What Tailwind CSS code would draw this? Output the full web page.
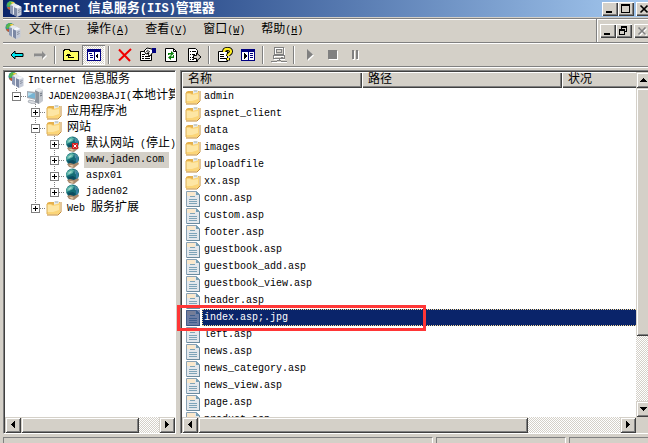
<!DOCTYPE html>
<html lang="zh-CN">
<head>
<meta charset="utf-8">
<title>Internet 信息服务(IIS)管理器</title>
<script src="https://cdn.jsdelivr.net/npm/@tailwindcss/browser@4"></script>
</head>
<body class="h-screen overflow-hidden bg-[#d4d0c8] font-['Liberation_Mono','Noto_Sans_CJK_SC',monospace] text-xs text-black">

<svg class="hidden" aria-hidden="true">
  <symbol id="iis" viewBox="0 0 16 16">
    <circle cx="5" cy="4.500" r="4.500" fill="#2c8a96"/>
    <path d="M1 3l3-3 3 1-2 3-3 2z" fill="#58b848"/><path d="M5 1h3l1 2-3 1z" fill="#e8c840"/><path d="M1 6l3 0 0 3-2-1z" fill="#c05838"/>
    <path d="M4 4l4-2 4 2v9l-4 1-4-2z" fill="#e6e9f0"/><path d="M4 4l3 1v9l-3-2z" fill="#8c98b4"/>
    <path d="M8 6l4-2 3.500 2v8L11 16l-3-2z" fill="#c4cad8"/><path d="M8 6l3 1v9l-3-2z" fill="#7c88a4"/><path d="M8 6l4-2 3.500 2L11 7.500z" fill="#f4f6fa"/>
    <path d="M12 9.500l2.500-1M12 11.500l2.500-1" stroke="#8890a0"/>
  </symbol>
  <symbol id="server" viewBox="0 0 16 16">
    <path d="M8 2l4-2 4 2v11l-4 3-4-2z" fill="#c4c8ce"/><path d="M8 2l4 2v12l-4-2z" fill="#8d949e"/><path d="M8 2l4-2 4 2-4 2z" fill="#eceef0"/>
    <path d="M13 6l2-1M13 8l2-1" stroke="#646c78"/>
    <path d="M0 3l9 1v8l-9-2z" fill="#a4abb4"/><path d="M1 4.500l7 1v5l-7-1.500z" fill="#76b4d4"/><path d="M1 4.500l5 .8-5 3z" fill="#b4dcee"/>
    <path d="M2 12l5 1 2 2-3 1-5-2z" fill="#d8dbe0" stroke="#8d949e" stroke-width=".6"/>
  </symbol>
  <symbol id="folder" viewBox="0 0 16 16">
    <path d="M1 3l2-1h5l1 1 5-1v11l-3 1H1z" fill="#e4b04c"/>
    <path d="M8 1l5 0v4H8z" fill="#e8ecec"/><path d="M9 2h3" stroke="#a8b4b4"/>
    <path d="M1 4h4l2 1 7-2v10l-3 1.500H1z" fill="#fbd578"/>
    <path d="M1 5h4l2 1 6-1v5l-6 2H1z" fill="#fde6a4"/>
    <path d="M15 2v10l-3 3H1" fill="none" stroke="#c48c34"/>
    <path d="M1 4v10" stroke="#dcae54"/>
  </symbol>
  <symbol id="file" viewBox="0 0 14 16">
    <path d="M.5.500h10l3 3v12H.500z" fill="#e4e8ec" stroke="#8aa2b4"/>
    <path d="M1 1h8v4H1z" fill="#fae8cc"/><path d="M10 0v4h4" fill="#78a0b4"/>
    <path d="M13.500 4v12M1 15.500h12" stroke="#6c8ca0"/>
    <path d="M4 5.500h5M3 8.500h8M3 10.500h8M3 12.500h8" stroke="#7ea4b8"/>
  </symbol>
  <symbol id="globe" viewBox="0 0 16 16">
    <circle cx="7.500" cy="7" r="6.500" fill="#146c76"/>
    <path d="M2 4l4-3 3 1-1 3-4 2-3 1z" fill="#5cb4a8"/><path d="M9 1l4 3 0 3-3-1z" fill="#4c90a4"/><path d="M3 9l5-1 3 2-3 3-4-1z" fill="#0c4c60"/>
    <path d="M3 5l3-2 1 1-3 2z" fill="#a8dcd0"/>
    <path d="M2 12l3-1 4 1 4-2 1 2-5 4-5-1z" fill="#a8886c"/><path d="M4 13l3 0 2 1-2 1z" fill="#e4c8a4"/>
    <path d="M11 4l2 1v5l-2 1z" fill="#347ca0"/>
  </symbol>
  <symbol id="line" viewBox="0 0 19 16"><path d="M4.500 0v16" stroke="#808080" stroke-dasharray="1 1"/></symbol>
  <symbol id="plus" viewBox="0 0 15 16">
    <path d="M4.500 0v16M9 8.500h6" stroke="#808080" stroke-dasharray="1 1"/>
    <path d="M.5 4.500h8v8h-8z" fill="#fff" stroke="#808080"/><path d="M2 8.500h5M4.500 6v5" stroke="#000"/>
  </symbol>
  <symbol id="plus-end" viewBox="0 0 15 16">
    <path d="M4.500 0v8M9 8.500h6" stroke="#808080" stroke-dasharray="1 1"/>
    <path d="M.5 4.500h8v8h-8z" fill="#fff" stroke="#808080"/><path d="M2 8.500h5M4.500 6v5" stroke="#000"/>
  </symbol>
  <symbol id="minus" viewBox="0 0 15 16">
    <path d="M4.500 0v4M9 8.500h6" stroke="#808080" stroke-dasharray="1 1"/>
    <path d="M.5 4.500h8v8h-8z" fill="#fff" stroke="#808080"/><path d="M2 8.500h5" stroke="#000"/>
  </symbol>
  <symbol id="arrow-left" viewBox="0 0 16 16"><path d="M9 4h1v7H9v-1H8V9H7V8H6V7h1V6h1V5h1z"/></symbol>
  <symbol id="arrow-right" viewBox="0 0 16 16"><path d="M6 4h1v1h1v1h1v1h1v1H9v1H8v1H7v1H6z"/></symbol>
  <symbol id="arrow-up" viewBox="0 0 16 16"><path d="M7 6h1v1h1v1h1v1h1v1H4V9h1V8h1V7h1z"/></symbol>
  <symbol id="arrow-down" viewBox="0 0 16 16"><path d="M4 6h7v1h-1v1H9v1H8v1H7V9H6V8H5V7H4z"/></symbol>
</svg>

<div class="flex h-full w-[calc(100%+4px)] flex-col pl-[3px]">

  <header class="mb-px flex h-[17px] shrink-0 items-center bg-linear-to-r from-[#0a246a] to-[#a6caf0] pl-[3px] text-white">
    <svg class="size-4"><use href="#iis"/></svg>
    <h1 class="ml-px whitespace-nowrap text-[13px] leading-4 font-bold"><span class="text-xs">Internet </span>信息服务<span class="text-xs">(IIS)</span>管理器</h1>
    <div class="ml-auto flex">
      <button aria-label="最小化" class="h-[14px] w-4 bg-[#d4d0c8] shadow-[inset_1px_1px_#fff,inset_-1px_-1px_#404040,inset_-2px_-2px_#808080]"><svg class="h-[14px] w-4" shape-rendering="crispEdges"><path d="M4 9h6v2H4z"/></svg></button>
      <button aria-label="最大化" class="mr-[2px] h-[14px] w-4 bg-[#d4d0c8] shadow-[inset_1px_1px_#fff,inset_-1px_-1px_#404040,inset_-2px_-2px_#808080]"><svg class="h-[14px] w-4" shape-rendering="crispEdges"><path d="M3 2h9v9H3zM4 4v6h7V4z" fill-rule="evenodd"/></svg></button>
      <button aria-label="关闭" class="h-[14px] w-4 bg-[#d4d0c8] shadow-[inset_1px_1px_#fff,inset_-1px_-1px_#404040,inset_-2px_-2px_#808080]"><svg class="h-[14px] w-4"><path d="M4.500 3.500l7 7M11.500 3.500l-7 7" stroke="#000" stroke-width="1.600"/></svg></button>
    </div>
  </header>

  <div class="flex h-6 shrink-0 items-center border-t border-[#808080] pl-[2px] shadow-[inset_0_1px_#fff]">
    <svg class="size-4"><use href="#iis"/></svg>
    <nav class="flex whitespace-nowrap leading-4" aria-label="菜单">
      <button class="px-2">文件<span class="text-[10px]">(<u>F</u>)</span></button>
      <button class="px-2">操作<span class="text-[10px]">(<u>A</u>)</span></button>
      <button class="px-2">查看<span class="text-[10px]">(<u>V</u>)</span></button>
      <button class="px-2">窗口<span class="text-[10px]">(<u>W</u>)</span></button>
      <button class="px-2">帮助<span class="text-[10px]">(<u>H</u>)</span></button>
    </nav>
    <div class="ml-auto flex h-full items-center border-l border-[#808080] pr-[2px] pl-[3px] shadow-[inset_1px_1px_#fff]">
      <button aria-label="最小化窗口" class="h-[14px] w-4 shadow-[inset_1px_1px_#fff,inset_-1px_-1px_#404040,inset_-2px_-2px_#808080]"><svg class="h-[14px] w-4" shape-rendering="crispEdges"><path d="M4 9h6v2H4z"/></svg></button>
      <button aria-label="还原窗口" class="mr-[2px] h-[14px] w-4 shadow-[inset_1px_1px_#fff,inset_-1px_-1px_#404040,inset_-2px_-2px_#808080]"><svg class="h-[14px] w-4" shape-rendering="crispEdges"><path d="M5 2h6v6H9v3H3V5h2zM6 4v1h3v2h1V4zM4 7v3h4V7z" fill-rule="evenodd"/></svg></button>
      <button aria-label="关闭窗口" class="h-[14px] w-4 shadow-[inset_1px_1px_#fff,inset_-1px_-1px_#404040,inset_-2px_-2px_#808080]"><svg class="h-[14px] w-4" fill="none" stroke-width="1.600"><path d="M5.500 4.500l7 7M12.500 4.500l-7 7" stroke="#fff"/><path d="M4.500 3.500l7 7M11.500 3.500l-7 7" stroke="#808080"/></svg></button>
    </div>
  </div>

  <div role="toolbar" aria-label="工具栏" class="flex h-6 shrink-0 items-center border-t border-[#808080] pl-[2px] shadow-[inset_0_1px_#fff]">
    <button aria-label="后退" class="flex w-[23px] justify-center"><svg class="size-4"><path d="M2 8l4-4v2.500h8v3H6V12z" fill="#00e8f0" stroke="#000"/></svg></button>
    <button aria-label="前进" class="flex w-[23px] justify-center"><svg class="size-4"><path d="M15 9l-4-4v2H3v3h8v3z" fill="#fff"/><path d="M14 8l-4-4v2.500H2v3h8V12z" fill="#8c8c8c"/></svg></button>
    <span class="mx-[3px] h-[18px] w-[2px] border-r border-l border-r-white border-l-[#808080]"></span>
    <button aria-label="上一级" class="flex w-[23px] justify-center"><svg class="size-4" shape-rendering="crispEdges"><path d="M.5 4.500l1-2h5l1 2h8v9H.500z" fill="#ffff60" stroke="#000"/><path d="M5.500 11V7M5 10.500h6M3 8.500h5M4 7.500h3" stroke="#000" fill="none"/></svg></button>
    <button aria-label="显示控制台树" aria-pressed="true" class="flex h-5 w-[23px] items-center justify-center bg-[repeating-conic-gradient(#d4d0c8_0_25%,#fff_0_50%)] bg-[length:2px_2px] shadow-[inset_1px_1px_#808080,inset_-1px_-1px_#fff]"><svg class="size-4" shape-rendering="crispEdges"><path d="M1 2h14v12H1z" fill="#000080"/><path d="M2 5h6v8H2zM9 5h5v8H9z" fill="#fff"/><path d="M3 6h3v1H3zM4 8h3v1H4zM4 10h3v1H4z" fill="#000080"/><path d="M12 6v6l-3-3z"/></svg></button>
    <span class="mx-[3px] h-[18px] w-[2px] border-r border-l border-r-white border-l-[#808080]"></span>
    <button aria-label="删除" class="flex w-[23px] justify-center"><svg class="size-4"><path d="M2 2.500L13 14M14 2L2 13.500" stroke="#f00000" stroke-width="2"/></svg></button>
    <button aria-label="属性" class="flex w-[23px] justify-center"><svg class="size-4"><path d="M.5 4.500h11v9H.500z" fill="#fff" stroke="#000"/><path d="M2 9.500h2M5 9.500h5M2 11.500h2M5 11.500h5M2 7.500h3" stroke="#000"/><path d="M4 4l3-3 5 1 1 3-3 4-2-1 1-2-3 1z" fill="#fff" stroke="#000"/><path d="M7 3l3 2M6 4l3 2" stroke="#000" stroke-width=".8"/><path d="M12 1h4v5h-4z" fill="#000080"/></svg></button>
    <button aria-label="刷新" class="flex w-[23px] justify-center"><svg class="size-4"><path d="M2.500 1.500h8l3 3v10h-11z" fill="#fff" stroke="#000"/><path d="M10.500 1.500v3h3" fill="none" stroke="#000"/><path d="M5 8V6h3V4l3 2.500L8 9V7.500H6V8zM11 8v3H8v2l-3-2.500L8 8v1.500h2V8z" fill="#088008"/></svg></button>
    <button aria-label="导出列表" class="flex w-[23px] justify-center"><svg class="size-4"><path d="M2.500 1.500h7l2 2v11h-9z" fill="#fff" stroke="#000"/><path d="M4 4.500h1M6 4.500h4M4 7.500h1M6 7.500h3M4 10.500h1M6 10.500h2M4 12.500h1M6 12.500h2" stroke="#000"/><path d="M7.500 8.500h3V6l4.500 4-4.500 4v-2.500h-3z" fill="#d4d0c8" stroke="#000"/></svg></button>
    <span class="mx-[3px] h-[18px] w-[2px] border-r border-l border-r-white border-l-[#808080]"></span>
    <button aria-label="帮助主题" class="flex w-[23px] justify-center"><svg class="size-4"><path d="M1.500 4.500h9v10h-9z" fill="#fff" stroke="#000"/><path d="M3 7.500h4M3 9.500h4M3 11.500h6" stroke="#000"/><path d="M7 5c0-4 7-4 7-.5 0 2.500-3 2-3 4.500M11 11v2.500" fill="none" stroke="#000" stroke-width="4"/><path d="M7 5c0-4 7-4 7-.5 0 2.500-3 2-3 4.500M11 11v2" fill="none" stroke="#ffee20" stroke-width="2.200"/></svg></button>
    <button aria-label="显示窗格" class="flex w-[23px] justify-center"><svg class="size-4" shape-rendering="crispEdges"><path d="M1 2h14v12H1z" fill="#000080"/><path d="M2 5h6v8H2zM9 5h5v8H9z" fill="#fff"/><path d="M10 6h3v1h-3zM10 8h3v1h-3zM10 10h3v1h-3z" fill="#000080"/><path d="M4 6v6l3-3z"/></svg></button>
    <span class="mx-[3px] h-[18px] w-[2px] border-r border-l border-r-white border-l-[#808080]"></span>
    <button aria-label="连接计算机" class="flex w-[23px] justify-center"><svg class="size-4" shape-rendering="crispEdges" fill="none"><path d="M4.500 1.500h9v7h-9zM3.500 9.500h10v3h-10zM1 15.500h15" stroke="#fff"/><path d="M3.500.500h9v7h-9zM5.500 2.500h5v3h-5zM2.500 8.500h11v3h-11zM10 10.500h2M0 14.500h6M10 14.500h6M6 13.500h4M8 12v2" stroke="#808080"/></svg></button>
    <span class="mx-[3px] h-[18px] w-[2px] border-r border-l border-r-white border-l-[#808080]"></span>
    <button aria-label="启动" class="flex w-[23px] justify-center"><svg class="size-4"><path d="M6 3v11l6-5.500z" fill="#fff"/><path d="M5 2v11l6-5.500z" fill="#808080"/></svg></button>
    <button aria-label="停止" class="flex w-[23px] justify-center"><svg class="size-4"><path d="M4 4h9v9H4z" fill="#fff"/><path d="M3 3h9v9H3z" fill="#808080"/></svg></button>
    <button aria-label="暂停" class="flex w-[23px] justify-center"><svg class="size-4"><path d="M5 4h2v9H5zM9 4h2v9H9z" fill="#fff"/><path d="M4 3h2v9H4zM8 3h2v9H8z" fill="#808080"/></svg></button>
  </div>

  <main class="flex min-h-0 flex-1 gap-1 border-t border-[#808080] pt-[3px] shadow-[inset_0_1px_#fff]">

    <section aria-label="控制台树" class="flex w-[173px] shrink-0 border border-t-[#808080] border-r-white border-b-white border-l-[#808080]">
      <div class="flex min-w-0 flex-1 flex-col border-t border-l border-[#404040] bg-white">
        <ul class="min-h-0 flex-1 overflow-hidden whitespace-nowrap leading-4">
          <li class="flex h-4 items-center pl-[3px]"><svg class="mr-1 size-4"><use href="#iis"/></svg><span><span class="text-[10px]">Internet </span>信息服务</span></li>
          <li class="flex h-4 items-center pl-[7px]"><svg class="h-4 w-[15px] shrink-0" shape-rendering="crispEdges"><use href="#minus"/></svg><svg class="mr-[5px] size-4 shrink-0"><use href="#server"/></svg><span><span class="text-[10px]">JADEN2003BAJI(</span>本地计算机<span class="text-[10px]">)</span></span></li>
          <li class="flex h-4 items-center pl-[26px]"><svg class="h-4 w-[15px]" shape-rendering="crispEdges"><use href="#plus"/></svg><svg class="mr-[5px] size-4"><use href="#folder"/></svg>应用程序池</li>
          <li class="flex h-4 items-center pl-[26px]"><svg class="h-4 w-[15px]" shape-rendering="crispEdges"><use href="#plus"/><path d="M4 6h1v2H4zM4 9h1v2H4z" fill="#fff"/></svg><svg class="mr-[5px] size-4"><use href="#folder"/></svg>网站</li>
          <li class="flex h-4 items-center pl-[26px]"><svg class="h-4 w-[19px] shrink-0" shape-rendering="crispEdges"><use href="#line"/></svg><svg class="h-4 w-[15px] shrink-0" shape-rendering="crispEdges"><use href="#plus"/></svg><svg class="mr-[5px] size-4 shrink-0"><use href="#globe"/><path d="M7 7h6v6H7z" fill="#d42020"/><path d="M8.500 8.500l3 3M11.500 8.500l-3 3" stroke="#fff"/></svg><span>默认网站<span class="text-[10px]"> (</span>停止<span class="text-[10px]">)</span></span></li>
          <li class="flex h-4 items-center pl-[26px]"><svg class="h-4 w-[19px]" shape-rendering="crispEdges"><use href="#line"/></svg><svg class="h-4 w-[15px]" shape-rendering="crispEdges"><use href="#plus"/></svg><svg class="mr-[3px] size-4"><use href="#globe"/></svg><span class="h-4 bg-[#d4d0c8] pr-[5px] pl-[2px] text-[10px]">www.jaden.com</span></li>
          <li class="flex h-4 items-center pl-[26px]"><svg class="h-4 w-[19px]" shape-rendering="crispEdges"><use href="#line"/></svg><svg class="h-4 w-[15px]" shape-rendering="crispEdges"><use href="#plus"/></svg><svg class="mr-[5px] size-4"><use href="#globe"/></svg><span class="text-[10px]">aspx01</span></li>
          <li class="flex h-4 items-center pl-[26px]"><svg class="h-4 w-[19px]" shape-rendering="crispEdges"><use href="#line"/></svg><svg class="h-4 w-[15px]" shape-rendering="crispEdges"><use href="#plus-end"/></svg><svg class="mr-[5px] size-4"><use href="#globe"/></svg><span class="text-[10px]">jaden02</span></li>
          <li class="flex h-4 items-center pl-[26px]"><svg class="h-4 w-[15px]" shape-rendering="crispEdges"><use href="#plus-end"/></svg><svg class="mr-[5px] size-4"><use href="#folder"/></svg><span><span class="text-[10px]">Web </span>服务扩展</span></li>
        </ul>
        <div class="flex h-4 bg-[repeating-conic-gradient(#d4d0c8_0_25%,#fff_0_50%)] bg-[length:2px_2px]">
          <button aria-label="向左滚动" class="size-4 bg-[#d4d0c8] shadow-[inset_1px_1px_#d4d0c8,inset_-1px_-1px_#404040,inset_2px_2px_#fff,inset_-2px_-2px_#808080]"><svg class="size-4" shape-rendering="crispEdges"><use href="#arrow-left"/></svg></button>
          <div class="w-[118px] bg-[#d4d0c8] shadow-[inset_1px_1px_#d4d0c8,inset_-1px_-1px_#404040,inset_2px_2px_#fff,inset_-2px_-2px_#808080]"></div>
          <button aria-label="向右滚动" class="ml-auto size-4 bg-[#d4d0c8] shadow-[inset_1px_1px_#d4d0c8,inset_-1px_-1px_#404040,inset_2px_2px_#fff,inset_-2px_-2px_#808080]"><svg class="size-4" shape-rendering="crispEdges"><use href="#arrow-right"/></svg></button>
        </div>
      </div>
    </section>

    <section aria-label="文件列表" class="relative flex min-w-0 flex-1 border-t border-b border-l border-t-[#808080] border-b-white border-l-[#808080]">
      <div class="flex min-w-0 flex-1 flex-col border-t border-l border-[#404040] bg-white">
        <div class="flex min-h-0 flex-1">
          <div class="min-w-0 flex-1 overflow-hidden">
            <table class="w-full table-fixed border-separate border-spacing-0 text-left text-[10px] leading-4">
              <colgroup><col class="w-[180px]"><col class="w-[200px]"><col></colgroup>
              <thead class="text-xs leading-4">
                <tr class="h-4 bg-[#d4d0c8]">
                  <th class="h-4 p-0 pl-[6px] font-normal shadow-[inset_1px_1px_#fff,inset_-1px_-1px_#404040,inset_-2px_-2px_#808080]">名称</th>
                  <th class="h-4 p-0 pl-[6px] font-normal shadow-[inset_1px_1px_#fff,inset_-1px_-1px_#404040,inset_-2px_-2px_#808080]">路径</th>
                  <th class="h-4 p-0 pl-[6px] font-normal shadow-[inset_1px_1px_#fff,inset_0_-1px_#404040,inset_0_-2px_#808080]">状况</th>
                </tr>
              </thead>
              <tbody>
                <tr><td colspan="3" class="h-[17px] p-0"><div class="flex items-center pl-[3px]"><svg class="mr-[3px] size-4"><use href="#folder"/></svg>admin</div></td></tr>
                <tr><td colspan="3" class="h-[17px] p-0"><div class="flex items-center pl-[3px]"><svg class="mr-[3px] size-4"><use href="#folder"/></svg>aspnet_client</div></td></tr>
                <tr><td colspan="3" class="h-[17px] p-0"><div class="flex items-center pl-[3px]"><svg class="mr-[3px] size-4"><use href="#folder"/></svg>data</div></td></tr>
                <tr><td colspan="3" class="h-[17px] p-0"><div class="flex items-center pl-[3px]"><svg class="mr-[3px] size-4"><use href="#folder"/></svg>images</div></td></tr>
                <tr><td colspan="3" class="h-[17px] p-0"><div class="flex items-center pl-[3px]"><svg class="mr-[3px] size-4"><use href="#folder"/></svg>uploadfile</div></td></tr>
                <tr><td colspan="3" class="h-[17px] p-0"><div class="flex items-center pl-[3px]"><svg class="mr-[3px] size-4"><use href="#folder"/></svg>xx.asp</div></td></tr>
                <tr><td colspan="3" class="h-[17px] p-0"><div class="flex items-center pl-1"><svg class="mr-1 h-4 w-[14px]"><use href="#file"/></svg>conn.asp</div></td></tr>
                <tr><td colspan="3" class="h-[17px] p-0"><div class="flex items-center pl-1"><svg class="mr-1 h-4 w-[14px]"><use href="#file"/></svg>custom.asp</div></td></tr>
                <tr><td colspan="3" class="h-[17px] p-0"><div class="flex items-center pl-1"><svg class="mr-1 h-4 w-[14px]"><use href="#file"/></svg>footer.asp</div></td></tr>
                <tr><td colspan="3" class="h-[17px] p-0"><div class="flex items-center pl-1"><svg class="mr-1 h-4 w-[14px]"><use href="#file"/></svg>guestbook.asp</div></td></tr>
                <tr><td colspan="3" class="h-[17px] p-0"><div class="flex items-center pl-1"><svg class="mr-1 h-4 w-[14px]"><use href="#file"/></svg>guestbook_add.asp</div></td></tr>
                <tr><td colspan="3" class="h-[17px] p-0"><div class="flex items-center pl-1"><svg class="mr-1 h-4 w-[14px]"><use href="#file"/></svg>guestbook_view.asp</div></td></tr>
                <tr><td colspan="3" class="h-[17px] p-0"><div class="flex items-center pl-1"><svg class="mr-1 h-4 w-[14px]"><use href="#file"/></svg>header.asp</div></td></tr>
                <tr aria-selected="true"><td colspan="3" class="h-[17px] p-0"><div class="flex items-center pl-1"><svg class="mr-[2px] h-4 w-[14px]"><use href="#file"/><rect width="14" height="16" fill="#0a246a" fill-opacity=".55"/></svg><span class="h-[17px] flex-1 border border-r-0 border-dotted border-[#f5db95] bg-[#0a246a] pl-px leading-[15px] text-white">index.asp;.jpg</span></div></td></tr>
                <tr><td colspan="3" class="h-[17px] p-0"><div class="flex items-center pl-1"><svg class="mr-1 h-4 w-[14px]"><use href="#file"/></svg>left.asp</div></td></tr>
                <tr><td colspan="3" class="h-[17px] p-0"><div class="flex items-center pl-1"><svg class="mr-1 h-4 w-[14px]"><use href="#file"/></svg>news.asp</div></td></tr>
                <tr><td colspan="3" class="h-[17px] p-0"><div class="flex items-center pl-1"><svg class="mr-1 h-4 w-[14px]"><use href="#file"/></svg>news_category.asp</div></td></tr>
                <tr><td colspan="3" class="h-[17px] p-0"><div class="flex items-center pl-1"><svg class="mr-1 h-4 w-[14px]"><use href="#file"/></svg>news_view.asp</div></td></tr>
                <tr><td colspan="3" class="h-[17px] p-0"><div class="flex items-center pl-1"><svg class="mr-1 h-4 w-[14px]"><use href="#file"/></svg>page.asp</div></td></tr>
                <tr><td colspan="3" class="h-[17px] p-0"><div class="flex items-center pl-1"><svg class="mr-1 h-4 w-[14px]"><use href="#file"/></svg>product.asp</div></td></tr>
              </tbody>
            </table>
          </div>
          <div class="flex w-4 shrink-0 flex-col bg-[repeating-conic-gradient(#d4d0c8_0_25%,#fff_0_50%)] bg-[length:2px_2px]">
            <button aria-label="向上滚动" class="size-4 bg-[#d4d0c8] shadow-[inset_1px_1px_#d4d0c8,inset_-1px_-1px_#404040,inset_2px_2px_#fff,inset_-2px_-2px_#808080]"><svg class="size-4" shape-rendering="crispEdges"><use href="#arrow-up"/></svg></button>
            <div class="h-[248px] bg-[#d4d0c8] shadow-[inset_1px_1px_#d4d0c8,inset_-1px_-1px_#404040,inset_2px_2px_#fff,inset_-2px_-2px_#808080]"></div>
            <button aria-label="向下滚动" class="mt-auto size-4 bg-[#d4d0c8] shadow-[inset_1px_1px_#d4d0c8,inset_-1px_-1px_#404040,inset_2px_2px_#fff,inset_-2px_-2px_#808080]"><svg class="size-4" shape-rendering="crispEdges"><use href="#arrow-down"/></svg></button>
          </div>
        </div>
        <div class="flex h-4 bg-[#d4d0c8]">
          <div class="flex flex-1 bg-[repeating-conic-gradient(#d4d0c8_0_25%,#fff_0_50%)] bg-[length:2px_2px]">
            <button aria-label="列表向左滚动" class="size-4 bg-[#d4d0c8] shadow-[inset_1px_1px_#d4d0c8,inset_-1px_-1px_#404040,inset_2px_2px_#fff,inset_-2px_-2px_#808080]"><svg class="size-4" shape-rendering="crispEdges"><use href="#arrow-left"/></svg></button>
            <div class="w-[330px] bg-[#d4d0c8] shadow-[inset_1px_1px_#d4d0c8,inset_-1px_-1px_#404040,inset_2px_2px_#fff,inset_-2px_-2px_#808080]"></div>
            <button aria-label="列表向右滚动" class="ml-auto size-4 bg-[#d4d0c8] shadow-[inset_1px_1px_#d4d0c8,inset_-1px_-1px_#404040,inset_2px_2px_#fff,inset_-2px_-2px_#808080]"><svg class="size-4" shape-rendering="crispEdges"><use href="#arrow-right"/></svg></button>
          </div>
          <div class="w-4"></div>
        </div>
      </div>
      <div class="pointer-events-none absolute top-[234px] -left-1 h-[26px] w-[249px] border-3 border-[#ff3636]"></div>
    </section>
  </main>

  <footer class="mt-[3px] flex h-[6px] shrink-0 gap-[3px]">
    <div class="w-[430px] border-t border-r border-l border-t-[#808080] border-r-white border-l-[#808080]"></div>
    <div class="w-[130px] border-t border-r border-l border-t-[#808080] border-r-white border-l-[#808080]"></div>
    <div class="flex-1 border-t border-l border-[#808080]"></div>
  </footer>
</div>
</body>
</html>
